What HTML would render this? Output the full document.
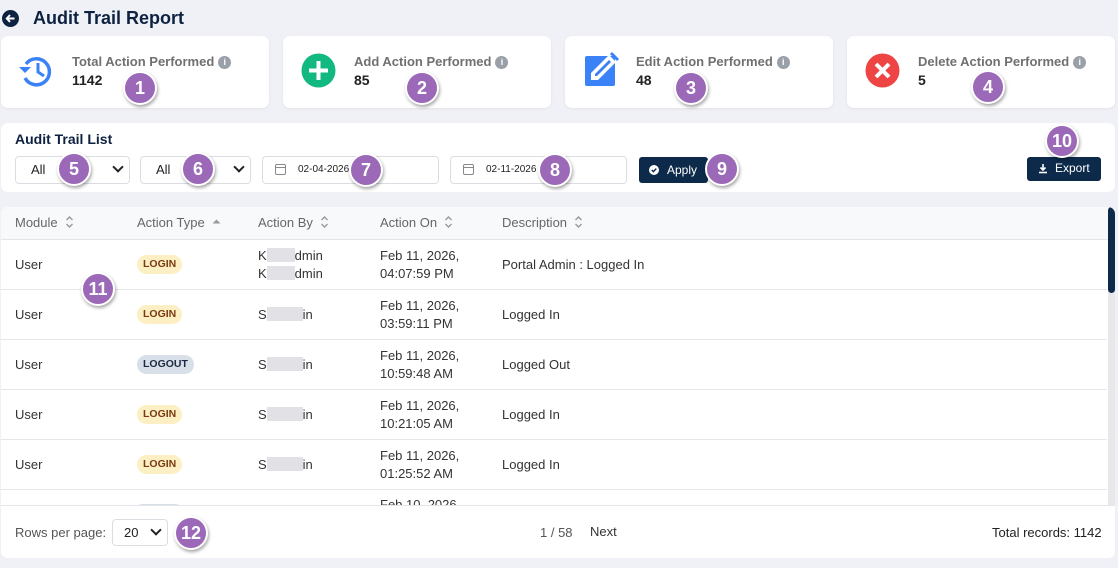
<!DOCTYPE html>
<html><head><meta charset="utf-8"><style>
*{box-sizing:border-box;margin:0;padding:0}
body{width:1118px;height:568px;background:#f0f1f6;font-family:"Liberation Sans",sans-serif;position:relative;overflow:hidden;color:#333}
.a{position:absolute}
.card{position:absolute;top:36px;height:72px;width:268px;background:#fff;border-radius:7px;box-shadow:0 1px 3px rgba(0,0,0,.06)}
.lbl{position:absolute;left:71px;top:18px;font-size:13px;color:#707070;font-weight:bold;white-space:nowrap}
.lbl i{display:inline-block;width:13px;height:13px;border-radius:50%;background:#9aa0a8;color:#fff;font-size:9px;font-style:normal;text-align:center;line-height:13px;margin-left:4px;vertical-align:1px}
.val{position:absolute;left:71px;top:36px;font-size:14px;font-weight:bold;color:#222}
.bd{position:absolute;width:34px;height:34px;border-radius:50%;background:#9b69b7;color:#fff;font-weight:bold;font-size:18px;text-align:center;line-height:31px;border:2px solid #fff;box-shadow:1px 2px 3px rgba(0,0,0,.35);transform:translate(-50%,-50%);z-index:5}
.sel{position:absolute;top:156px;height:28px;border:1px solid #dcdde2;border-radius:4px;background:#fff;font-size:13px;padding-left:15px;line-height:26px;color:#222}
.sel .ch{position:absolute;right:7px;top:6px;width:8px;height:8px;border-right:2px solid #222;border-bottom:2px solid #222;transform:rotate(45deg)}
.dt{position:absolute;top:156px;height:28px;border:1px solid #dcdde2;border-radius:4px;background:#fff;font-size:10px;line-height:26px;padding-left:35px;color:#222}
.cal{position:absolute;left:12px;top:7px;width:11px;height:11px;border:1.3px solid #888;border-radius:2px}
.cal:before{content:"";position:absolute;left:-1px;right:-1px;top:2px;border-top:1.3px solid #888}
.th{position:absolute;top:215px;font-size:13px;color:#666;white-space:nowrap}
.th svg{margin-left:7px;vertical-align:-2px}
.row{position:absolute;left:1px;width:1106px;height:50px;border-bottom:1px solid #e6e7ea}
.c{position:absolute;font-size:13px;color:#333;line-height:18px}
.pill{position:absolute;left:137px;height:19px;border-radius:10px;font-size:10.5px;font-weight:bold;line-height:19px;padding:0 6px}
.li{background:#fdefc4;color:#7a3a10}
.lo{background:#d9dfe8;color:#1c2a40}
.bl{display:inline-block;width:44px;height:14px;background:#e2e2e6;vertical-align:-2px}
</style></head><body>
<svg class="a" style="left:2px;top:10px" width="17" height="17" viewBox="0 0 17 17"><circle cx="8.5" cy="8.5" r="8.5" fill="#0d2240"/><path d="M12.5 8.5H5M8 5L4.8 8.5 8 12" stroke="#fff" stroke-width="2" fill="none"/></svg>
<div class="a" style="left:33px;top:8px;font-size:18px;font-weight:bold;color:#0d2240">Audit Trail Report</div>

<div class="card" style="left:1px"><svg class="a" style="left:16px;top:16px" width="38" height="38" viewBox="0 0 38 38"><path d="M9 12A13 13 0 1 1 8 26" stroke="#3b82f6" stroke-width="3.5" fill="none"/><path d="M2 15l6 6 6-6z" fill="#3b82f6"/><path d="M21 11v9l6 4" stroke="#3b82f6" stroke-width="3" fill="none"/></svg><div class="lbl">Total Action Performed<i>i</i></div><div class="val">1142</div></div>
<div class="card" style="left:283px"><svg class="a" style="left:18px;top:17px" width="35" height="35"><circle cx="17.5" cy="17.5" r="17" fill="#11b981"/><path d="M17.5 8v19M8 17.5h19" stroke="#fff" stroke-width="4"/></svg><div class="lbl">Add Action Performed<i>i</i></div><div class="val">85</div></div>
<div class="card" style="left:565px"><svg class="a" style="left:18px;top:14px" width="38" height="38" viewBox="0 0 38 38"><rect x="2" y="6" width="30" height="30" rx="2" fill="#3b82f6"/><path d="M8 30v-7L26 5l7 7L15 30z" fill="#fff"/><path d="M12 26v-2l14-14 2 2-14 14z" fill="#3b82f6"/><path d="M28 3l7 7" stroke="#3b82f6" stroke-width="3"/></svg><div class="lbl">Edit Action Performed<i>i</i></div><div class="val">48</div></div>
<div class="card" style="left:847px"><svg class="a" style="left:18px;top:17px" width="35" height="35"><circle cx="17.5" cy="17.5" r="17" fill="#ef4444"/><path d="M11 11l13 13M24 11L11 24" stroke="#fff" stroke-width="4"/></svg><div class="lbl">Delete Action Performed<i>i</i></div><div class="val">5</div></div>

<div class="a" style="left:1px;top:123px;width:1114px;height:69px;background:#fff;border-radius:7px"></div>
<div class="a" style="left:15px;top:131px;font-size:14px;font-weight:bold;color:#0d2240">Audit Trail List</div>
<div class="sel" style="left:15px;width:115px">All<span class="ch"></span></div>
<div class="sel" style="left:140px;width:111px">All<span class="ch"></span></div>
<div class="dt" style="left:262px;width:177px"><span class="cal"></span>02-04-2026</div>
<div class="dt" style="left:450px;width:177px"><span class="cal"></span>02-11-2026</div>
<div class="a" style="left:639px;top:157px;width:69px;height:26px;background:#0d2a4a;border-radius:3px;color:#fff;font-size:12px;line-height:26px;padding-left:28px">Apply<svg class="a" style="left:10px;top:8px" width="10" height="10"><circle cx="5" cy="5" r="5" fill="#fff"/><path d="M2.8 5l1.6 1.6L7.3 3.6" stroke="#0d2a4a" stroke-width="1.4" fill="none"/></svg></div>
<div class="a" style="left:1027px;top:157px;width:74px;height:24px;background:#0d2a4a;border-radius:3px;color:#fff;font-size:12px;line-height:23px;padding-left:28px">Export<svg class="a" style="left:11px;top:6px" width="10" height="11"><path d="M5 1v6M2.5 4.5L5 7l2.5-2.5" stroke="#fff" stroke-width="1.6" fill="none"/><path d="M1 9.5h8" stroke="#fff" stroke-width="1.6"/></svg></div>

<div class="a" style="left:1px;top:207px;width:1114px;height:351px;background:#fff;border-radius:7px;overflow:hidden">
<div class="a" style="left:0;top:0;width:1114px;height:33px;background:#f8f9fb;border-bottom:1px solid #e4e5ea"></div>
<div class="a" style="left:0;top:298px;width:1114px;height:53px;background:#fff;border-top:1px solid #e4e5ea"></div>
<div class="a" style="left:1107px;top:0;width:7px;height:298px;background:#e8e8ea"></div>
<div class="a" style="left:1107px;top:0;width:7px;height:86px;background:#0d2a4a;border-radius:4px"></div>
</div>
<div class="th" style="left:15px">Module<svg width="9" height="14"><path d="M1.5 5L4.5 2l3 3M1.5 9l3 3 3-3" stroke="#999" stroke-width="1.4" fill="none"/></svg></div>
<div class="th" style="left:137px">Action Type<svg width="9" height="14"><path d="M0.5 8.5L4.5 4.5l4 4z" fill="#999"/></svg></div>
<div class="th" style="left:258px">Action By<svg width="9" height="14"><path d="M1.5 5L4.5 2l3 3M1.5 9l3 3 3-3" stroke="#999" stroke-width="1.4" fill="none"/></svg></div>
<div class="th" style="left:380px">Action On<svg width="9" height="14"><path d="M1.5 5L4.5 2l3 3M1.5 9l3 3 3-3" stroke="#999" stroke-width="1.4" fill="none"/></svg></div>
<div class="th" style="left:502px">Description<svg width="9" height="14"><path d="M1.5 5L4.5 2l3 3M1.5 9l3 3 3-3" stroke="#999" stroke-width="1.4" fill="none"/></svg></div>

<div class="row" style="top:240px"></div><div class="row" style="top:290px"></div><div class="row" style="top:340px"></div><div class="row" style="top:390px"></div><div class="row" style="top:440px"></div>

<div class="c" style="left:15px;top:256px">User</div><div class="pill li" style="top:255px">LOGIN</div>
<div class="c" style="left:258px;top:247px">K<span class="bl" style="width:28px"></span>dmin<br>K<span class="bl" style="width:28px"></span>dmin</div>
<div class="c" style="left:380px;top:247px">Feb 11, 2026,<br>04:07:59 PM</div><div class="c" style="left:502px;top:256px">Portal Admin : Logged In</div>

<div class="c" style="left:15px;top:306px">User</div><div class="pill li" style="top:305px">LOGIN</div>
<div class="c" style="left:258px;top:306px">S<span class="bl" style="width:36px"></span>in</div>
<div class="c" style="left:380px;top:297px">Feb 11, 2026,<br>03:59:11 PM</div><div class="c" style="left:502px;top:306px">Logged In</div>

<div class="c" style="left:15px;top:356px">User</div><div class="pill lo" style="top:355px">LOGOUT</div>
<div class="c" style="left:258px;top:356px">S<span class="bl" style="width:36px"></span>in</div>
<div class="c" style="left:380px;top:347px">Feb 11, 2026,<br>10:59:48 AM</div><div class="c" style="left:502px;top:356px">Logged Out</div>

<div class="c" style="left:15px;top:406px">User</div><div class="pill li" style="top:405px">LOGIN</div>
<div class="c" style="left:258px;top:406px">S<span class="bl" style="width:36px"></span>in</div>
<div class="c" style="left:380px;top:397px">Feb 11, 2026,<br>10:21:05 AM</div><div class="c" style="left:502px;top:406px">Logged In</div>

<div class="c" style="left:15px;top:456px">User</div><div class="pill li" style="top:455px">LOGIN</div>
<div class="c" style="left:258px;top:456px">S<span class="bl" style="width:36px"></span>in</div>
<div class="c" style="left:380px;top:447px">Feb 11, 2026,<br>01:25:52 AM</div><div class="c" style="left:502px;top:456px">Logged In</div>

<div class="a" style="left:1px;top:490px;width:1106px;height:15px;overflow:hidden"><div class="c" style="left:379px;top:6px">Feb 10, 2026,</div><div class="a" style="left:136px;top:14px;width:44px;height:10px;background:#d9dfe8;border-radius:5px"></div></div>

<div class="c" style="left:15px;top:524px;color:#555">Rows per page:</div>
<div class="sel" style="left:112px;top:519px;width:56px;height:27px;padding-left:11px;line-height:25px">20<span class="ch"></span></div>
<div class="c" style="left:540px;top:524px;color:#555">1 / 58</div>
<div class="c" style="left:590px;top:523px;color:#333">Next</div>
<div class="c" style="left:992px;top:524px;color:#222">Total records: 1142</div>

<div class="bd" style="left:140px;top:88px">1</div>
<div class="bd" style="left:422px;top:88px">2</div>
<div class="bd" style="left:691px;top:88px">3</div>
<div class="bd" style="left:988px;top:87px">4</div>
<div class="bd" style="left:74px;top:169px">5</div>
<div class="bd" style="left:198px;top:169px">6</div>
<div class="bd" style="left:366px;top:170px">7</div>
<div class="bd" style="left:555px;top:170px">8</div>
<div class="bd" style="left:722px;top:169px">9</div>
<div class="bd" style="left:1062px;top:141px">10</div>
<div class="bd" style="left:98px;top:289px">11</div>
<div class="bd" style="left:191px;top:533px">12</div>
</body></html>
